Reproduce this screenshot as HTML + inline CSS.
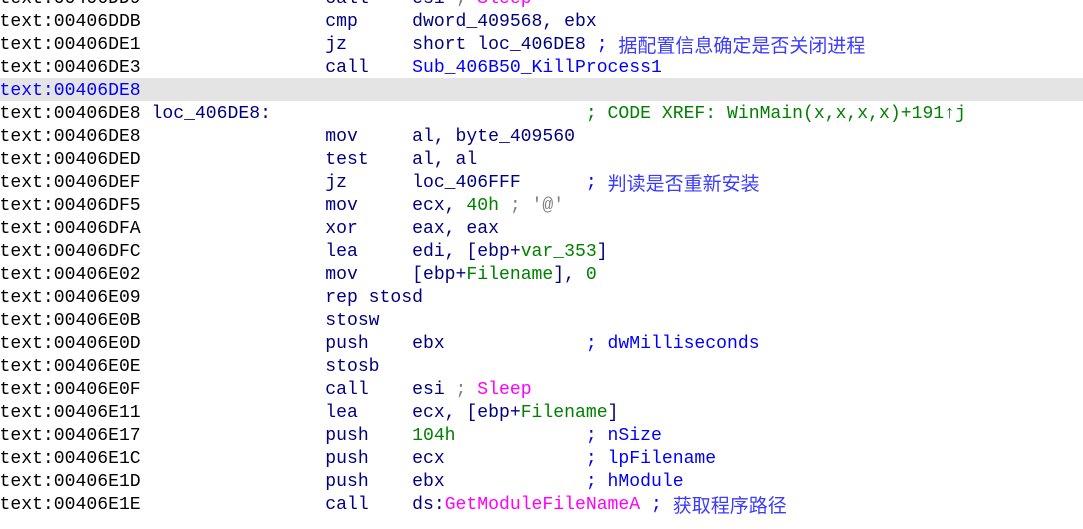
<!DOCTYPE html>
<html><head><meta charset="utf-8"><style>
html,body{margin:0;padding:0;background:#fff;width:1083px;height:529px;overflow:hidden;}
#c{position:absolute;left:-0.5px;top:-14px;font-family:"Liberation Mono","DejaVu Sans Mono",monospace;font-size:18.1px;line-height:23px;color:#000080;}
.r{height:21px;padding-top:2px;width:1100px;white-space:pre;}
.h{background:#e4e4e4;}
.a{color:#000;}
.ab{color:#0000ff;}
.b{color:#0000ff;}
.g{color:#008000;}
.gr{color:#808080;}
.m{color:#ff00ff;}
.cj{display:inline-block;height:23px;vertical-align:top;overflow:hidden;font-family:"Noto Sans CJK SC","WenQuanYi Zen Hei",sans-serif;font-size:19px;line-height:21px;color:#3b3bff;}
</style></head><body><div id="c"><div class="r"><span class="a">text:00406DD9</span>                 call    esi <span class="gr">;</span> <span class="m">Sleep</span></div><div class="r"><span class="a">text:00406DDB</span>                 cmp     dword_409568, ebx</div><div class="r"><span class="a">text:00406DE1</span>                 jz      short loc_406DE8 <span class="b">; </span><span class="cj">据配置信息确定是否关闭进程</span></div><div class="r"><span class="a">text:00406DE3</span>                 call    <span class="b">Sub_406B50_KillProcess1</span></div><div class="r h"><span class="ab">text:00406DE8</span></div><div class="r"><span class="a">text:00406DE8</span> loc_406DE8:                             <span class="g">; CODE XREF: WinMain(x,x,x,x)+191↑j</span></div><div class="r"><span class="a">text:00406DE8</span>                 mov     al, byte_409560</div><div class="r"><span class="a">text:00406DED</span>                 test    al, al</div><div class="r"><span class="a">text:00406DEF</span>                 jz      loc_406FFF      <span class="b">; </span><span class="cj">判读是否重新安装</span></div><div class="r"><span class="a">text:00406DF5</span>                 mov     ecx, <span class="g">40h</span> <span class="gr">; '@'</span></div><div class="r"><span class="a">text:00406DFA</span>                 xor     eax, eax</div><div class="r"><span class="a">text:00406DFC</span>                 lea     edi, [ebp+<span class="g">var_353</span>]</div><div class="r"><span class="a">text:00406E02</span>                 mov     [ebp+<span class="g">Filename</span>], <span class="g">0</span></div><div class="r"><span class="a">text:00406E09</span>                 rep stosd</div><div class="r"><span class="a">text:00406E0B</span>                 stosw</div><div class="r"><span class="a">text:00406E0D</span>                 push    ebx             <span class="b">; dwMilliseconds</span></div><div class="r"><span class="a">text:00406E0E</span>                 stosb</div><div class="r"><span class="a">text:00406E0F</span>                 call    esi <span class="gr">;</span> <span class="m">Sleep</span></div><div class="r"><span class="a">text:00406E11</span>                 lea     ecx, [ebp+<span class="g">Filename</span>]</div><div class="r"><span class="a">text:00406E17</span>                 push    <span class="g">104h</span>            <span class="b">; nSize</span></div><div class="r"><span class="a">text:00406E1C</span>                 push    ecx             <span class="b">; lpFilename</span></div><div class="r"><span class="a">text:00406E1D</span>                 push    ebx             <span class="b">; hModule</span></div><div class="r"><span class="a">text:00406E1E</span>                 call    ds:<span class="m">GetModuleFileNameA</span> <span class="b">; </span><span class="cj">获取程序路径</span></div></div></body></html>
